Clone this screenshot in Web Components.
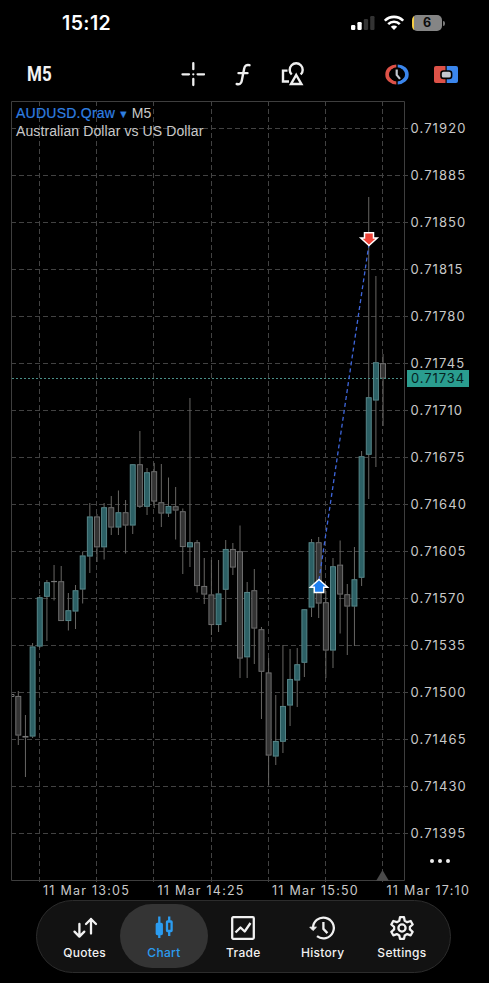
<!DOCTYPE html>
<html lang="en">
<head>
<meta charset="utf-8">
<title>AUDUSD.Qraw M5</title>
<style>
    html, body {
        margin: 0;
        background: #000;
    }
    body {
        width: 489px;
        height: 983px;
        overflow: hidden;
        font-family: Inter, 'Liberation Sans', sans-serif;
        color: #c9c9c9;
    }
</style>
</head>
<body>
<trading-app></trading-app>

<script>
// --- Chart data ---
// direction, body top, body bottom, wick top, wick bottom
const candles = [
    ['n', 696, 735.5, 691, 745], ['n', 736, 737.5, 715, 777], ['u', 646.5, 736.5, 643, 738],
    ['u', 597.3, 646.5, 595, 648], ['u', 582.3, 596.7, 580, 641], ['n', 581, 582, 565, 600.5],
    ['n', 581.3, 621, 566, 621], ['u', 610.3, 621, 593, 630.5], ['u', 590.3, 611.5, 585, 629],
    ['u', 555.5, 589.5, 551.5, 603.5], ['u', 516.5, 556.5, 503, 573], ['n', 516.5, 547.3, 514, 562],
    ['u', 507.3, 547.3, 503, 559.5], ['n', 507.3, 527.5, 496, 535], ['u', 512.3, 527.5, 490.5, 535],
    ['n', 512.3, 525.5, 500, 553.5], ['u', 464.3, 525.5, 464, 534], ['n', 464.3, 506.7, 431, 508],
    ['u', 472.3, 506.7, 468, 515], ['n', 471.3, 501.5, 463, 508], ['n', 502.3, 513.5, 464, 527],
    ['u', 506, 513.5, 477.5, 517], ['n', 506.3, 510.5, 487, 539.5], ['n', 511.3, 547, 508.5, 574],
    ['u', 542.3, 547.3, 398, 567], ['n', 542.3, 586, 540, 592.5], ['n', 586, 594.5, 558, 604],
    ['n', 594.5, 625, 560, 635], ['u', 593.5, 625, 560, 632], ['u', 549, 589.7, 540, 622],
    ['n', 549, 567.5, 543, 575], ['n', 551.3, 658.5, 525.5, 678], ['u', 592, 657.3, 582, 678],
    ['n', 590.3, 628.5, 569, 664], ['n', 629.3, 671.7, 627, 719], ['n', 672.5, 755.5, 658, 785],
    ['u', 741, 756.5, 695, 765], ['u', 706, 741.7, 645, 753], ['u', 679, 705.5, 649, 726],
    ['u', 664.3, 680.5, 648, 707], ['u', 609.3, 662.7, 609, 677], ['u', 542.3, 607.5, 539, 617],
    ['n', 542.3, 603.5, 537, 618], ['n', 602.3, 650.5, 591, 678], ['u', 566.3, 650.5, 558, 668],
    ['n', 564.7, 594.5, 540.5, 633.5], ['n', 594.3, 606.5, 584, 655], ['u', 579.3, 606.5, 547, 646],
    ['u', 456.3, 577.7, 451, 586], ['u', 397.3, 454.7, 197, 499], ['u', 362.3, 400.5, 276, 467],
    ['n', 363.3, 378.5, 354, 426]
];

const prices = ['0.71920', '0.71885', '0.71850', '0.71815', '0.71780', '0.71745', '0.71710', '0.71675',
    '0.71640', '0.71605', '0.71570', '0.71535', '0.71500', '0.71465', '0.71430', '0.71395'];

const times = ['11 Mar 13:05', '11 Mar 14:25', '11 Mar 15:50', '11 Mar 17:10'];

const icons = {
    quotes: '<path d="M6.400 8v12.400M1.500 15.600l4.900 5 4.900-5M18 17.500V3M13 8l5-5 5 5" stroke-linecap="round"/>',
    chart: '<path d="M7.300.5v21.500M17.200.5V5M17.200 15.500v4.500"/><rect x="4.800" y="8" width="5" height="10" rx=".5" fill="currentColor"/><rect x="15" y="5.500" width="4.600" height="9.500" rx=".5"/>',
    trade: '<rect x="1.200" y="1.200" width="21.600" height="21.600" rx="1"/><path d="m4.500 16.500 5-5 4.200 4 5.800-8.500"/>',
    history: '<path d="M2 12.200A10.400 10.400 0 1 1 6 20.200M12.400 6v6.900l4 4.200"/><path d="m-1.200 11.200 3.200 3.300 3.400-3.300z" fill="currentColor" stroke-width="1"/>',
    settings: '<path d="M10 1.200h4l.7 3.600 2.500 1.400 3.500-1.200 2 3.500-2.800 2.400v2.500l2.800 2.400-2 3.500-3.500-1.200-2.500 1.400-.7 3.300h-4l-.7-3.300-2.500-1.400-3.500 1.200-2-3.500 2.800-2.400v-2.500L1.300 8.500l2-3.500 3.500 1.200 2.500-1.400z"/><circle cx="12" cy="12" r="3.600"/>'
};

// --- Web Component: StatusBar ---
class StatusBar extends HTMLElement {
    constructor() {
        super();
        this.attachShadow({ mode: 'open' });
        this.shadowRoot.innerHTML = `
            <style>
                :host {
                    display: flex;
                    justify-content: space-between;
                    align-items: center;
                    height: 46px;
                    padding: 0 44px 0 62px;
                }
                .time {
                    font-size: 19.5px;
                    font-weight: 600;
                    letter-spacing: .4px;
                    color: #fff;
                }
                .right {
                    display: flex;
                    align-items: center;
                    gap: 8.5px;
                }
                .battery {
                    display: flex;
                    align-items: center;
                    gap: 1px;
                }
                .level {
                    width: 30px;
                    height: 16px;
                    border-radius: 5px;
                    background: linear-gradient(90deg, #f5cd45 2px, #858585 2px);
                    color: #0c0c0c;
                    font-size: 12.5px;
                    font-weight: 700;
                    line-height: 16px;
                    text-align: center;
                }
                .cap {
                    width: 2px;
                    height: 5px;
                    border-radius: 0 2px 2px 0;
                    background: #777;
                }
            </style>
            <div class="time">15:12</div>
            <div class="right">
                <svg width="24" height="16" viewBox="0 0 24 16">
                    <rect x="0" y="10" width="4.3" height="5" rx="1.2" fill="#fff"/>
                    <rect x="6.4" y="7" width="4.3" height="8" rx="1.2" fill="#fff"/>
                    <rect x="12.8" y="4" width="4.3" height="11" rx="1.2" fill="#333"/>
                    <rect x="19.2" y="1" width="4.3" height="14" rx="1.2" fill="#333"/>
                </svg>
                <svg width="20" height="16" viewBox="0 0 20 16" fill="none" stroke="#fff" stroke-width="2.6">
                    <path d="M.8 5.700a13 13 0 0 1 18.400 0M4.200 9.200a8.200 8.200 0 0 1 11.600 0"/>
                    <path d="M6.800 11.700a4.600 4.600 0 0 1 6.400 0L10 15z" fill="#fff" stroke="none"/>
                </svg>
                <div class="battery"><div class="level">6</div><div class="cap"></div></div>
            </div>
        `;
    }
}
customElements.define('status-bar', StatusBar);

// --- Web Component: ChartToolbar ---
class ChartToolbar extends HTMLElement {
    constructor() {
        super();
        this.attachShadow({ mode: 'open' });
        this.shadowRoot.innerHTML = `
            <style>
                :host {
                    display: flex;
                    align-items: center;
                    height: 55px;
                    padding: 0 31px 0 27px;
                }
                .period {
                    width: 154px;
                    font: 700 20px Roboto, sans-serif;
                    color: #f2f2f2;
                    transform: scaleX(.85);
                    transform-origin: left;
                }
                .tools {
                    display: flex;
                    gap: 26px;
                    flex: 1;
                }
                .trade {
                    display: flex;
                    gap: 25px;
                }
                svg {
                    display: block;
                }
            </style>
            <div class="period">M5</div>
            <div class="tools">
                <svg width="24" height="26" viewBox="0 0 24 26" stroke="#efefef" stroke-width="2.3" stroke-linecap="round">
                    <path d="M12.3 2.2v6M12.3 18v6M1.5 13.3h6.5M16.6 13.3h6.5M12.3 13.3h.01"/>
                </svg>
                <svg width="24" height="26" viewBox="0 0 24 26" fill="none" stroke="#efefef" stroke-width="2.400" stroke-linecap="round">
                    <path d="M18.500 4.200c-3-.7-4.700.5-5.300 3.200L10.700 20c-.5 2.700-2.200 3.600-5 3M7.500 12.100h9"/>
                </svg>
                <svg width="24" height="26" viewBox="0 0 24 26" fill="none" stroke="#efefef" stroke-width="2.400">
                    <path d="M6.500 9.600H2V20.500h6"/>
                    <path d="M10.700 13.500a6.500 6.500 0 1 1 9 0"/>
                    <path d="m15.200 14 5.200 9H10z"/>
                </svg>
            </div>
            <div class="trade">
                <svg width="24" height="26" viewBox="0 0 24 26" fill="none">
                    <path d="M11.300 5.200A9.200 8.200 0 0 0 11.300 21.600" stroke="#dd5248" stroke-width="3.600"/>
                    <path d="M12.700 5.200A9.200 8.200 0 0 1 12.700 21.600" stroke="#3b86ed" stroke-width="3.600"/>
                    <circle cx="12" cy="13.400" r="7.200" fill="#000"/>
                    <path d="M11.700 8.500v5.400l3.300 4" stroke="#c4c8d0" stroke-width="2.200"/>
                </svg>
                <svg width="24" height="26" viewBox="0 0 24 26">
                    <path d="M2 5h9.500v17H2a2 2 0 0 1-2-2V7a2 2 0 0 1 2-2z" fill="#dd5248"/>
                    <path d="M12.700 5H22a2 2 0 0 1 2 2v13a2 2 0 0 1-2 2h-9.300z" fill="#3b86ed"/>
                    <rect x="7" y="10" width="10.600" height="7.400" rx="2.500" fill="#c4c8d0" stroke="#000" stroke-width="1.600"/>
                </svg>
            </div>
        `;
    }
}
customElements.define('chart-toolbar', ChartToolbar);

// --- Web Component: CandleChart ---
class CandleChart extends HTMLElement {
    constructor() {
        super();
        this.attachShadow({ mode: 'open' });

        const rows = prices.map((p, i) => `M11 ${128.5 + i * 47}H408`).join('');
        const cols = [39.5, 96.5, 153.5, 211.5, 268.5, 325.5, 382.5];
        const bars = candles.map(([dir, top, bottom, high, low], i) => {
            const x = 18.3 + i * 7.152;
            const fill = dir === 'u' ? '#2c6065' : '#343434';
            const edge = dir === 'u' ? '#5d8d90' : '#777';
            return `<path d="M${x} ${high}V${top}M${x} ${bottom}V${low}" stroke="#686764"/>
                <rect x="${x - 2.5}" y="${top + .4}" width="5" height="${Math.max(bottom - top - .8, .3)}" fill="${fill}" stroke="${edge}" stroke-width=".9"/>`;
        }).join('');

        this.shadowRoot.innerHTML = `
            <style>
                :host {
                    display: block;
                    position: relative;
                    width: 409px;
                    height: 785px;
                }
                svg {
                    display: block;
                }
                .caption {
                    position: absolute;
                    left: 16px;
                    top: 4px;
                    font: 14px/17.500px 'Liberation Sans', Arial, sans-serif;
                    letter-spacing: .1px;
                    white-space: nowrap;
                }
                .caption div {
                    height: 17.500px;
                }
                .symbol {
                    color: #2f7fe0;
                    letter-spacing: .25px;
                    -webkit-text-stroke: .2px;
                }
                .mark {
                    margin: 0 1px;
                    font-size: 8px;
                    line-height: 0;
                    vertical-align: 1px;
                    font-family: 'DejaVu Sans', sans-serif;
                }
            </style>
            <svg width="409" height="785" viewBox="0 101 409 785" fill="none">
                <path d="${rows}" stroke="#424242" stroke-dasharray="5 3"/>
                <path d="${cols.map(x => `M${x} 101V884`).join('')}" stroke="#424242" stroke-dasharray="5 3"/>
                <path d="M11.500 101.500H404.500V880.500H11.500z" stroke="#3e3e3e"/>
                <path d="m382.500 870 6.500 11h-13z" fill="#4a4a4a"/>
                <path d="M12 694.500h2v2h-2" stroke="#777"/>
                ${bars}
                <path d="M12 378.500H404" stroke="#4a8f88" stroke-dasharray="2 2"/>
                <path d="M319 580 369 244" stroke="#3e66dc" stroke-width="1.300" stroke-dasharray="4 3"/>
                <path d="m319 579.500 8.500 7.700h-3.800v5.400h-9.400v-5.400h-3.800z" fill="#1e7ff0" stroke="#fff" stroke-width="1.500"/>
                <path d="m369 245.500 8.200-7.400h-3.700v-5.400h-9v5.400h-3.700z" fill="#ef4136" stroke="#fff" stroke-width="1.500"/>
            </svg>
            <div class="caption">
                <div><span class="symbol">AUDUSD.Qraw <span class="mark">▼</span></span> M5</div>
                <div>Australian Dollar vs US Dollar</div>
            </div>
        `;
    }
}
customElements.define('candle-chart', CandleChart);

// --- Web Component: PriceScale ---
class PriceScale extends HTMLElement {
    constructor() {
        super();
        this.attachShadow({ mode: 'open' });
        this.shadowRoot.innerHTML = `
            <style>
                :host {
                    display: block;
                    position: relative;
                    flex: 1;
                    padding-top: 4px;
                    font-size: 13px;
                    letter-spacing: 1.100px;
                }
                .price {
                    height: 47px;
                    line-height: 47px;
                    padding-left: 1.500px;
                }
                .current {
                    position: absolute;
                    left: -2px;
                    top: 269px;
                    width: 58px;
                    height: 17px;
                    line-height: 17px;
                    padding-left: 4px;
                    background: #2a9d8f;
                    color: #06221f;
                    letter-spacing: .9px;
                }
                .more {
                    display: flex;
                    gap: 4px;
                    padding: 2px 0 0 21px;
                }
                .more i {
                    width: 4px;
                    height: 4px;
                    border-radius: 50%;
                    background: #eee;
                }
            </style>
            ${prices.map(p => `<div class="price">${p}</div>`).join('')}
            <div class="more"><i></i><i></i><i></i></div>
            <div class="current">0.71734</div>
        `;
    }
}
customElements.define('price-scale', PriceScale);

// --- Web Component: TimeScale ---
class TimeScale extends HTMLElement {
    constructor() {
        super();
        this.attachShadow({ mode: 'open' });
        this.shadowRoot.innerHTML = `
            <style>
                :host {
                    display: flex;
                    height: 14px;
                    padding-left: 43px;
                    font-size: 12.5px;
                    line-height: 9px;
                    letter-spacing: 1.250px;
                    white-space: nowrap;
                }
                span {
                    flex: 0 0 114.500px;
                }
            </style>
            ${times.map(t => `<span>${t}</span>`).join('')}
        `;
    }
}
customElements.define('time-scale', TimeScale);

// --- Web Component: TabItem ---
class TabItem extends HTMLElement {
    constructor() {
        super();
        this.attachShadow({ mode: 'open' });
    }

    connectedCallback() {
        this.shadowRoot.innerHTML = `
            <style>
                :host {
                    display: flex;
                    flex-direction: column;
                    align-items: center;
                    box-sizing: border-box;
                    width: 79.300px;
                    height: 64px;
                    padding-top: 12px;
                    gap: 5px;
                    color: #f1f1f1;
                }
                :host([active]) {
                    width: 88px;
                    margin: 0 -4.300px;
                    border-radius: 32px;
                    background: #343434;
                    color: #2b9cf0;
                }
                svg {
                    display: block;
                    overflow: visible;
                }
                .label {
                    font-size: 12px;
                    font-weight: 500;
                    line-height: 15px;
                    letter-spacing: .3px;
                }
            </style>
            <svg width="24" height="24" viewBox="0 0 24 24" fill="none" stroke="currentColor" stroke-width="2.300" stroke-linejoin="round">${icons[this.getAttribute('icon')]}</svg>
            <div class="label"><slot></slot></div>
        `;
    }
}
customElements.define('tab-item', TabItem);

// --- Web Component: TabBar ---
class TabBar extends HTMLElement {
    constructor() {
        super();
        this.attachShadow({ mode: 'open' });
        this.shadowRoot.innerHTML = `
            <style>
                :host {
                    display: flex;
                    box-sizing: border-box;
                    width: 415px;
                    height: 73px;
                    margin-left: 36px;
                    padding: 3px 8px;
                    border: 1px solid #2c2c2c;
                    border-radius: 37px;
                    background: #121212;
                }
            </style>
            <slot></slot>
        `;
    }
}
customElements.define('tab-bar', TabBar);

// --- Web Component: TradingApp ---
class TradingApp extends HTMLElement {
    constructor() {
        super();
        this.attachShadow({ mode: 'open' });
        this.shadowRoot.innerHTML = `
            <style>
                :host {
                    display: flex;
                    flex-direction: column;
                    height: 983px;
                }
                .chart {
                    display: flex;
                }
            </style>
            <status-bar></status-bar>
            <chart-toolbar></chart-toolbar>
            <div class="chart">
                <candle-chart></candle-chart>
                <price-scale></price-scale>
            </div>
            <time-scale></time-scale>
            <tab-bar>
                <tab-item icon="quotes">Quotes</tab-item>
                <tab-item icon="chart" active>Chart</tab-item>
                <tab-item icon="trade">Trade</tab-item>
                <tab-item icon="history">History</tab-item>
                <tab-item icon="settings">Settings</tab-item>
            </tab-bar>
        `;
    }
}
customElements.define('trading-app', TradingApp);
</script>
</body>
</html>
